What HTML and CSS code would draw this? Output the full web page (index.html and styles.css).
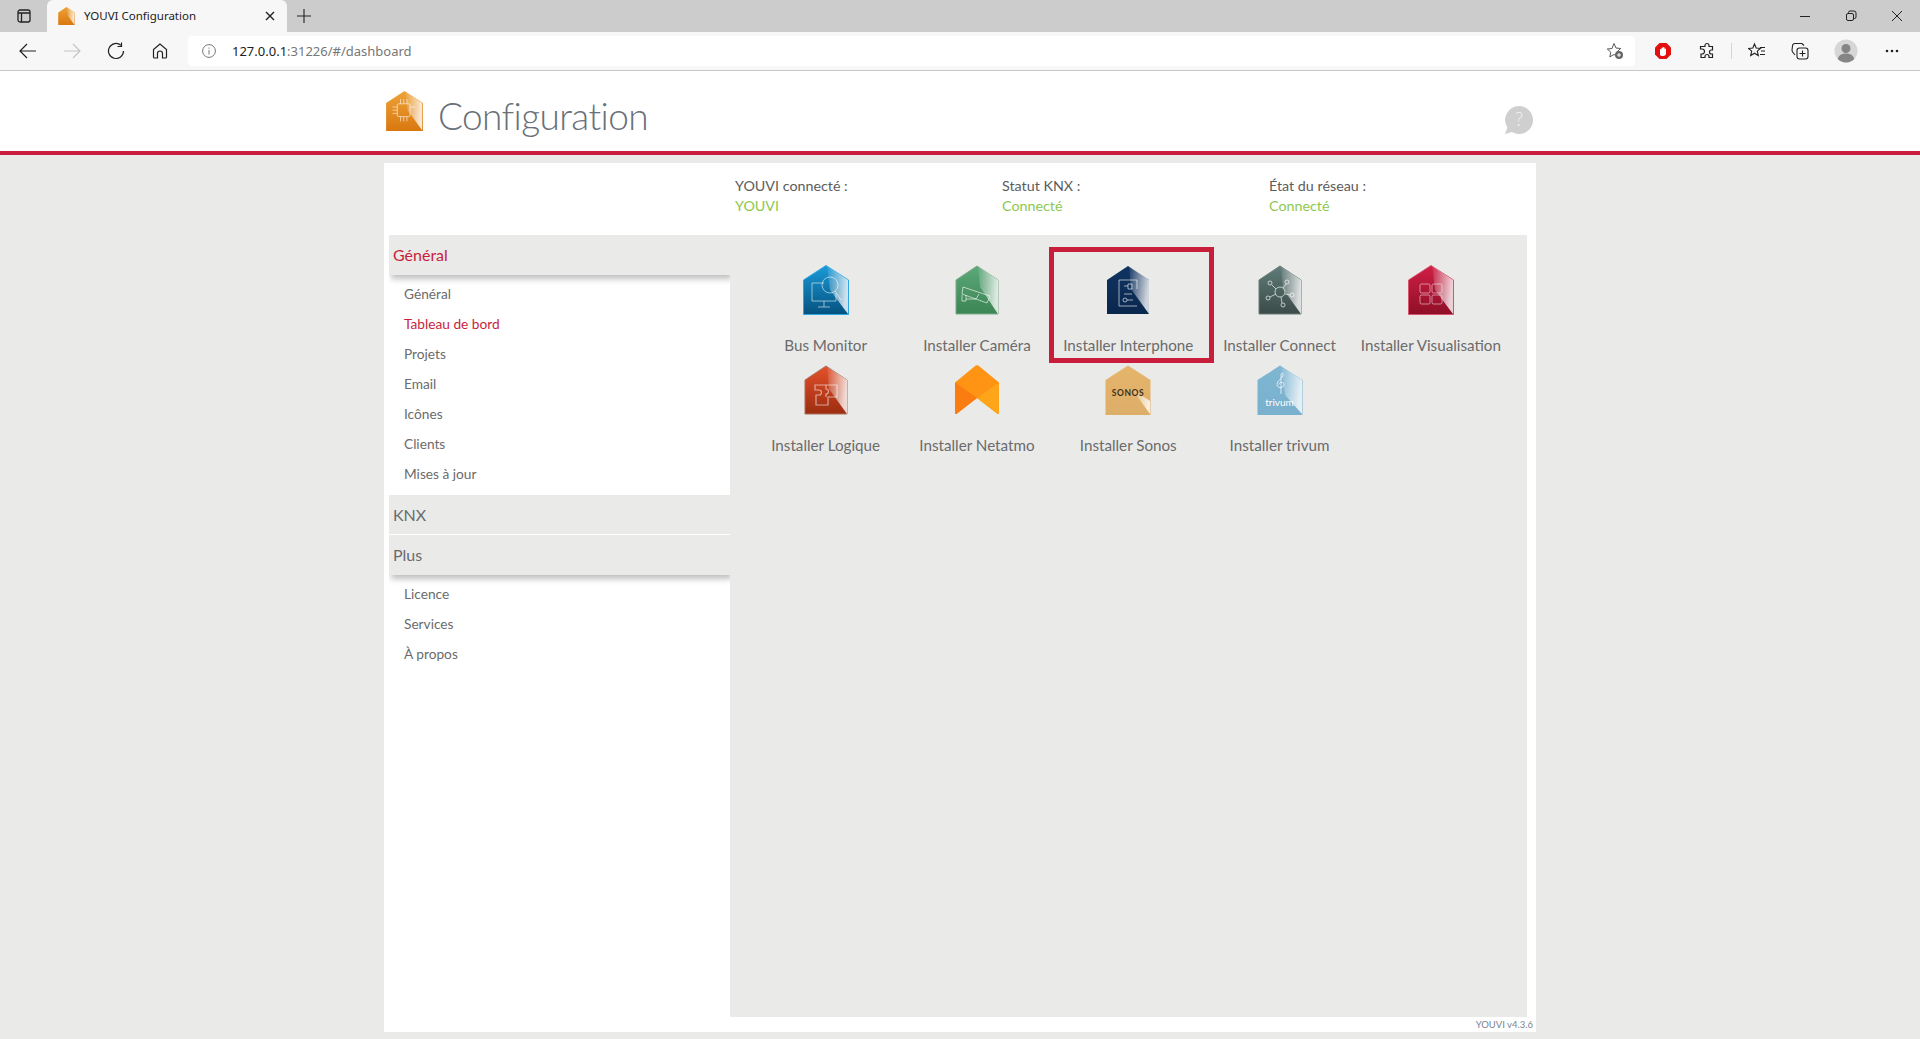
FILE: index.html
```html
<!DOCTYPE html>
<html lang="fr">

<head>
    <meta charset="UTF-8">
    <title>YOUVI Configuration</title>
    <link rel="stylesheet" href="styles.css">
</head>

<body>
    <svg class="svg-defs" aria-hidden="true">
        <defs>
            <linearGradient id="gloss" x1="0" y1="0" x2="1" y2="0.3">
                <stop offset="0" stop-color="#fff" stop-opacity="0.05" />
                <stop offset="1" stop-color="#fff" stop-opacity="0.8" />
            </linearGradient>
            <linearGradient id="g-orange" x1="0" y1="0" x2="0" y2="1">
                <stop offset="0" stop-color="#eda238" />
                <stop offset="1" stop-color="#d9780f" />
            </linearGradient>
            <linearGradient id="g-blue" x1="0" y1="0" x2="0" y2="1">
                <stop offset="0" stop-color="#1c9ad8" />
                <stop offset="1" stop-color="#04527f" />
            </linearGradient>
            <linearGradient id="g-green" x1="0" y1="0" x2="0" y2="1">
                <stop offset="0" stop-color="#5ca878" />
                <stop offset="1" stop-color="#3c8554" />
            </linearGradient>
            <linearGradient id="g-navy" x1="0" y1="0" x2="0" y2="1">
                <stop offset="0" stop-color="#0f3462" />
                <stop offset="1" stop-color="#0a274d" />
            </linearGradient>
            <linearGradient id="g-slate" x1="0" y1="0" x2="0" y2="1">
                <stop offset="0" stop-color="#5f7c78" />
                <stop offset="1" stop-color="#3b4b48" />
            </linearGradient>
            <linearGradient id="g-red" x1="0" y1="0" x2="0" y2="1">
                <stop offset="0" stop-color="#d01f44" />
                <stop offset="1" stop-color="#8f0f28" />
            </linearGradient>
            <linearGradient id="g-rust" x1="0" y1="0" x2="0" y2="1">
                <stop offset="0" stop-color="#e4502a" />
                <stop offset="1" stop-color="#9c2d10" />
            </linearGradient>
            <linearGradient id="g-sand" x1="0" y1="0" x2="0" y2="1">
                <stop offset="0" stop-color="#e6b56c" />
                <stop offset="1" stop-color="#ddae68" />
            </linearGradient>
            <linearGradient id="g-sky" x1="0" y1="0" x2="0" y2="1">
                <stop offset="0" stop-color="#7fb6d2" />
                <stop offset="1" stop-color="#79b0cd" />
            </linearGradient>
        </defs>
    </svg>

    <div class="tab-strip">
        <div class="tab-actions">
            <svg width="14" height="14" viewBox="0 0 14 14" fill="none" stroke="#222" stroke-width="1.3">
                <rect x="1" y="1" width="12" height="12" rx="2" />
                <path d="M1 4h12M4.500 4v9" />
            </svg>
        </div>
        <div class="tab">
            <svg width="17" height="18" viewBox="0 0 46 50">
                <polygon points="23,0 46,15 46,50 0,50 0,15" fill="url(#g-orange)" />
                <polygon points="24,1 45,15 45,49 27,25" fill="url(#gloss)" />
            </svg>
            <span class="tab-title">YOUVI Configuration</span>
            <svg class="tab-close" width="10" height="10" viewBox="0 0 10 10" stroke="#222" stroke-width="1.4">
                <path d="M1 1l8 8M9 1l-8 8" />
            </svg>
        </div>
        <div class="new-tab">
            <svg width="14" height="14" viewBox="0 0 14 14" stroke="#222" stroke-width="1.1">
                <path d="M7 0v14M0 7h14" />
            </svg>
        </div>
        <div class="window-controls">
            <svg width="46" height="32" viewBox="0 0 46 32" stroke="#222" fill="none">
                <path d="M18 16.500h10" />
            </svg>
            <svg width="46" height="32" viewBox="0 0 46 32" stroke="#222" fill="none">
                <rect x="18.500" y="13.500" width="7" height="7" rx="1.500" />
                <path d="M20.500 13.500v-1a1.500 1.500 0 0 1 1.500-1.500h4a2 2 0 0 1 2 2v4a1.500 1.500 0 0 1-1.500 1.500h-1" />
            </svg>
            <svg width="46" height="32" viewBox="0 0 46 32" stroke="#222" fill="none">
                <path d="M18 11l10 10M28 11l-10 10" />
            </svg>
        </div>
    </div>

    <div class="toolbar">
        <div class="tool-btn">
            <svg width="18" height="18" viewBox="0 0 18 18" fill="none" stroke="#222" stroke-width="1.2">
                <path d="M17 9H1M8 2L1 9l7 7" />
            </svg>
        </div>
        <div class="tool-btn">
            <svg width="18" height="18" viewBox="0 0 18 18" fill="none" stroke="#c4c4c4" stroke-width="1.2">
                <path d="M1 9h16M10 2l7 7-7 7" />
            </svg>
        </div>
        <div class="tool-btn">
            <svg width="18" height="18" viewBox="0 0 18 18" fill="none" stroke="#222" stroke-width="1.2">
                <path d="M14 3.400A7.500 7.500 0 1 0 16.500 9M14.500 0.500v4h-4" />
            </svg>
        </div>
        <div class="tool-btn">
            <svg width="18" height="18" viewBox="0 0 18 18" fill="none" stroke="#222" stroke-width="1.2">
                <path d="M9 2L2.500 7.500V15a1 1 0 0 0 1 1h3v-4.500a2.500 2.500 0 0 1 5 0V16h3a1 1 0 0 0 1-1V7.500z" />
            </svg>
        </div>
        <div class="address-bar">
            <svg class="info-icon" width="14" height="14" viewBox="0 0 14 14" fill="none" stroke="#777">
                <circle cx="7" cy="7" r="6.400" />
                <path d="M7 6v4.500M7 3.500v1.200" />
            </svg>
            <span class="url"><span class="url-host">127.0.0.1</span>:31226/#/dashboard</span>
            <svg class="star-add" width="18" height="18" viewBox="0 0 18 18" fill="none" stroke="#555">
                <path d="M8 1.500l2 4.500 4.700.5-3.500 3.200 1 4.700L8 12.500l-4.200 2.400 1-4.700-3.500-3.200 4.700-.5z" />
                <circle cx="13" cy="13" r="4" fill="#666" stroke="none" />
                <path d="M13 11v4M11 13h4" stroke="#fff" />
            </svg>
        </div>
        <div class="tool-btn">
            <svg width="18" height="18" viewBox="0 0 18 18">
                <path d="M5.500 1h7L17 5.500v7L12.500 17h-7L1 12.500v-7z" fill="#e2110f" />
                <path d="M6 13V7.500a.8.8 0 0 1 1.500 0V6a.8.8 0 0 1 1.500 0v-.5a.8.8 0 0 1 1.500 0V7a.8.8 0 0 1 1.500 0v4c0 2-1 3-3 3H8c-1 0-1.500-.5-2-1z" fill="#fff" />
            </svg>
        </div>
        <div class="tool-btn">
            <svg width="18" height="18" viewBox="0 0 18 18" fill="none" stroke="#222" stroke-width="1.2">
                <path d="M7 3.500a2 2 0 0 1 4 0V4.500h3.500v3.500h-1a2 2 0 0 0 0 4h1v3.500H11v-1a2 2 0 0 0-4 0v1H3V12h1a2.500 2.500 0 0 0 0-5H2.500V4.500H7z" />
            </svg>
        </div>
        <div class="tool-sep"></div>
        <div class="tool-btn narrow">
            <svg width="18" height="18" viewBox="0 0 18 18" fill="none" stroke="#222" stroke-width="1.1">
                <path d="M6.500 2l1.700 4 4.300.4-3.200 2.800 1 4.300-3.800-2.300-3.800 2.300 1-4.300L.5 6.400l4.300-.4z" />
                <path d="M12 5.500h5M13 9h4M12 12.500h5" />
            </svg>
        </div>
        <div class="tool-btn wide">
            <svg width="18" height="18" viewBox="0 0 18 18" fill="none" stroke="#222" stroke-width="1.1">
                <rect x="6" y="6" width="11" height="11" rx="2.500" />
                <path d="M11.500 8.500v6M8.500 11.500h6M13 3.500L11 1.500H4a2.500 2.500 0 0 0-2.500 2.500L1 8c0 1 .3 1.800 1 2.500L4 13" />
            </svg>
        </div>
        <div class="tool-btn wide">
            <svg width="24" height="24" viewBox="0 0 24 24">
                <circle cx="12" cy="12" r="11.500" fill="#d6d6d6" />
                <circle cx="12" cy="9.500" r="4.500" fill="#858585" />
                <path d="M3.800 20c1-4 4-5.500 8.200-5.500s7.200 1.500 8.200 5.500a11.500 11.500 0 0 1-16.400 0z" fill="#858585" />
            </svg>
        </div>
        <div class="tool-btn">
            <svg width="14" height="4" viewBox="0 0 14 4" fill="#222">
                <circle cx="2" cy="2" r="1.300" />
                <circle cx="7" cy="2" r="1.300" />
                <circle cx="12" cy="2" r="1.300" />
            </svg>
        </div>
    </div>

    <header class="app-header">
        <div class="header-inner">
            <svg class="logo" width="37" height="40" viewBox="0 0 46 50">
                <polygon points="23,0 46,15 46,50 0,50 0,15" fill="url(#g-orange)" />
                <polygon points="24,1 45,15 45,49 27,24" fill="url(#gloss)" />
                <g fill="none" stroke="#fff" stroke-opacity="0.6" stroke-width="1.200">
                    <rect x="14" y="16" width="16" height="16" rx="2" />
                    <path d="M8 20h6M8 24h6M8 28h6M18 10v6M22 10v6M26 10v6M18 32v6M22 32v6M26 32v6M30 20h6" />
                </g>
            </svg>
            <h1 class="page-title">Configuration</h1>
            <svg class="help-icon" width="30" height="30" viewBox="0 0 30 30">
                <path d="M15 1a14 14 0 1 1-7 26.100L1 29l2.400-6.500A14 14 0 0 1 15 1z" fill="#cfcfcf" />
                <text x="15" y="21" text-anchor="middle" class="help-mark">?</text>
            </svg>
        </div>
    </header>
    <div class="red-line"></div>

    <main class="card">
        <div class="status-row">
            <div class="status-item">
                <div>YOUVI connecté :</div>
                <div class="status-ok">YOUVI</div>
            </div>
            <div class="status-item">
                <div>Statut KNX :</div>
                <div class="status-ok">Connecté</div>
            </div>
            <div class="status-item">
                <div>État du réseau :</div>
                <div class="status-ok">Connecté</div>
            </div>
        </div>

        <div class="panel">
            <nav class="sidebar">
                <div class="side-head open active">Général</div>
                <ul class="side-list">
                    <li>Général</li>
                    <li class="active">Tableau de bord</li>
                    <li>Projets</li>
                    <li>Email</li>
                    <li>Icônes</li>
                    <li>Clients</li>
                    <li>Mises à jour</li>
                </ul>
                <div class="side-head knx">KNX</div>
                <div class="side-head open">Plus</div>
                <ul class="side-list">
                    <li>Licence</li>
                    <li>Services</li>
                    <li>À propos</li>
                </ul>
            </nav>

            <section class="apps">
                <div class="app">
                    <svg class="app-icon" viewBox="0 0 46 50">
                        <polygon points="23,0.500 45.500,15 45.500,49.500 0.500,49.500 0.500,15" fill="url(#g-blue)" stroke="#2ea7e0" />
                        <polygon points="24,1 45,15 45,49 27,25" fill="url(#gloss)" />
                        <g fill="none" stroke="#fff" stroke-opacity="0.55">
                            <path d="M21 18H9v18h24v-8M21 36v6M15 42h12" />
                            <circle cx="27" cy="20" r="8" />
                            <path d="M32 26l6 9" />
                        </g>
                    </svg>
                    <div class="app-name">Bus Monitor</div>
                </div>
                <div class="app">
                    <svg class="app-icon" viewBox="0 0 46 50">
                        <polygon points="23,1 44,15 44,49 2,49 2,15" fill="url(#g-green)" stroke="#7da88a" />
                        <polygon points="24,1.500 44,15 44,49 26,22" fill="url(#gloss)" />
                        <g fill="none" stroke="#fff" stroke-opacity="0.6">
                            <path d="M9 22l27 9-3 7-25-9zM12 30v6H8v-6M12 34h10l3-5" />
                        </g>
                    </svg>
                    <div class="app-name">Installer Caméra</div>
                </div>
                <div class="app selected">
                    <svg class="app-icon" viewBox="0 0 46 50">
                        <polygon points="23,1 44,15 44,49 2,49 2,15" fill="url(#g-navy)" />
                        <polygon points="24,1.500 44,15 44,49 26,24" fill="url(#gloss)" />
                        <g fill="none" stroke="#fff" stroke-opacity="0.6">
                            <path d="M32 24V15H14v26h18M23 19h4v5h-4zM23 21l-4 0M19 29h8" />
                            <circle cx="20" cy="35" r="2" />
                            <path d="M22 35h6" />
                        </g>
                    </svg>
                    <div class="app-name">Installer Interphone</div>
                </div>
                <div class="app">
                    <svg class="app-icon" viewBox="0 0 46 50">
                        <polygon points="23,1 44,15 44,49 2,49 2,15" fill="url(#g-slate)" stroke="#6b7b78" />
                        <polygon points="24,1.500 44,15 44,49 26,24" fill="url(#gloss)" />
                        <g fill="none" stroke="#fff" stroke-opacity="0.65">
                            <circle cx="23" cy="27" r="5" />
                            <circle cx="13" cy="18" r="2" />
                            <circle cx="30" cy="17" r="2" />
                            <circle cx="35" cy="30" r="2" />
                            <circle cx="26" cy="40" r="2" />
                            <circle cx="11" cy="33" r="2" />
                            <path d="M15 20l4 4M29 19l-3 4M33 30l-5-1M25 38l-1-6M13 32l6-3" />
                        </g>
                    </svg>
                    <div class="app-name">Installer Connect</div>
                </div>
                <div class="app">
                    <svg class="app-icon" viewBox="0 0 46 50">
                        <polygon points="23,0.500 45.500,15 45.500,49.500 0.500,49.500 0.500,15" fill="url(#g-red)" stroke="#d8546c" />
                        <polygon points="24,1 45,15 45,49 27,25" fill="url(#gloss)" />
                        <g fill="none" stroke="#fff" stroke-opacity="0.5">
                            <rect x="12" y="19" width="10" height="9" rx="1.500" />
                            <rect x="24" y="19" width="10" height="9" rx="1.500" />
                            <rect x="12" y="30" width="10" height="9" rx="1.500" />
                            <rect x="24" y="30" width="10" height="9" rx="1.500" />
                        </g>
                    </svg>
                    <div class="app-name">Installer Visualisation</div>
                </div>
                <div class="app">
                    <svg class="app-icon" viewBox="0 0 46 50">
                        <polygon points="23,1 44,15 44,49 2,49 2,15" fill="url(#g-rust)" stroke="#a8705f" />
                        <polygon points="24,1.500 44,15 44,49 26,24" fill="url(#gloss)" />
                        <g fill="none" stroke="#fff" stroke-opacity="0.55" stroke-width="1.200">
                            <path d="M12 20h22v12h-9v8H13V30h3a2.500 2.500 0 0 0 0-5h-4zM23 20v4a2.500 2.500 0 0 1 0 5v3" />
                        </g>
                    </svg>
                    <div class="app-name">Installer Logique</div>
                </div>
                <div class="app">
                    <svg class="app-icon" viewBox="0 0 46 50">
                        <path d="M20.500 1.500a3.500 3.500 0 0 1 5 0L45 17.500V48a1 1 0 0 1-1.700.7L23 33 2.700 48.700A1 1 0 0 1 1 48V17.500z" fill="#ff9314" />
                        <path d="M1 17.500L23 33 2.700 48.700A1 1 0 0 1 1 48z" fill="#fb7c10" />
                        <path d="M45 17.500L23 33l20.300 15.700A1 1 0 0 0 45 48z" fill="#ffa51a" />
                    </svg>
                    <div class="app-name">Installer Netatmo</div>
                </div>
                <div class="app">
                    <svg class="app-icon" viewBox="0 0 46 50">
                        <polygon points="23,0.500 45.500,15 45.500,50 0.500,50 0.500,15" fill="url(#g-sand)" />
                        <polygon points="27,24 45,36 45,49" fill="url(#gloss)" />
                        <text x="23" y="31" text-anchor="middle" class="sonos-mark">SONOS</text>
                    </svg>
                    <div class="app-name">Installer Sonos</div>
                </div>
                <div class="app">
                    <svg class="app-icon" viewBox="0 0 46 50">
                        <polygon points="23,0.500 45.500,15 45.500,50 0.500,50 0.500,15" fill="url(#g-sky)" />
                        <polygon points="24,1 45,15 45,49 28,30" fill="url(#gloss)" />
                        <g fill="none" stroke="#fff" stroke-opacity="0.75">
                            <path d="M24 29V10c0-2 2-3 2-.500 0 4-6 6-6 10 0 4 7 4 7 0 0-3-5-3-5 0" />
                        </g>
                        <text x="22.500" y="41" text-anchor="middle" class="trivum-mark">trivum</text>
                    </svg>
                    <div class="app-name">Installer trivum</div>
                </div>
            </section>
        </div>

        <div class="version">YOUVI v4.3.6</div>
    </main>
</body>

</html>
```

FILE: styles.css
```css
*,
*::after {
    box-sizing: border-box;
}

html,
body {
    height: 100%;
}

body {
    margin: 0;
    display: flex;
    flex-direction: column;
    overflow: hidden;
    background-color: #eaeae9;
    font-family: Lato, "Noto Sans", sans-serif;
    color: #6b6b6b;
}

.svg-defs {
    position: absolute;
    width: 0;
    height: 0;
}

/* browser chrome */
.tab-strip {
    display: flex;
    flex: none;
    height: 32px;
    background-color: #ccc;
}

.tab-actions {
    display: flex;
    align-items: center;
    justify-content: center;
    width: 47px;
}

.tab {
    display: flex;
    align-items: center;
    width: 240px;
    padding: 0 10px 0 11px;
    gap: 9px;
    background-color: #f7f7f7;
    border-radius: 6px 6px 0 0;
}

.tab-title {
    flex: 1;
    margin-top: -1px;
    font-family: "Noto Sans", sans-serif;
    font-size: 11.500px;
    color: #222;
}

.tab-close {
    margin-right: 2px;
}

.new-tab {
    display: flex;
    align-items: center;
    justify-content: center;
    width: 34px;
}

.window-controls {
    display: flex;
    margin-left: auto;
}

.toolbar {
    display: flex;
    flex: none;
    align-items: center;
    height: 39px;
    padding: 0 6px;
    background-color: #f7f7f7;
    border-bottom: 1px solid #c8c8c8;
}

.tool-btn {
    display: flex;
    flex: none;
    align-items: center;
    justify-content: center;
    width: 44px;
    height: 32px;
}

.tool-btn.wide {
    margin-right: 2px;
}

.tool-btn.narrow {
    margin-right: -1px;
}

.tool-sep {
    width: 1px;
    height: 16px;
    margin: 0 3px 0 2px;
    background-color: #d4d4d4;
}

.address-bar {
    display: flex;
    flex: 1;
    align-items: center;
    height: 30px;
    margin: 0 6px;
    padding: 0 11px 0 14px;
    background-color: #fff;
    border-radius: 4px;
}

.url {
    flex: 1;
    margin-left: 16px;
    font-family: "Noto Sans", sans-serif;
    font-size: 13px;
    color: #777;
}

.url-host {
    color: #222;
}

/* app header */
.app-header {
    flex: none;
    height: 80px;
    background-color: #fff;
}

.header-inner {
    display: flex;
    align-items: center;
    width: 1152px;
    height: 100%;
    margin: 0 auto;
    padding: 0 0 0 2px;
}

.page-title {
    flex: 1;
    margin: 9px 0 0 15px;
    font-size: 37px;
    font-weight: 300;
    letter-spacing: -0.6px;
    color: #6a7078;
}

.help-icon {
    margin: 18px 2px 0 0;
}

.help-mark {
    font-size: 19px;
    font-weight: 300;
    fill: #f2f2f2;
}

.red-line {
    flex: none;
    height: 4px;
    background-color: #c81e3c;
}

/* main card */
.card {
    display: flex;
    flex: 1;
    flex-direction: column;
    width: 1152px;
    margin: 8px auto 7px;
    padding: 0 9px 0 5px;
    background-color: #fff;
}

.status-row {
    display: flex;
    flex: none;
    height: 72px;
    padding: 13px 0 0 346px;
    font-size: 14.300px;
    line-height: 20px;
    color: #5c5c5c;
}

.status-item {
    flex: none;
    width: 267px;
}

.status-ok {
    color: #8cc850;
}

.panel {
    display: flex;
    flex: 1;
    background-color: #eaeae9;
}

.sidebar {
    flex: none;
    width: 341px;
    background-color: #fff;
}

.side-head {
    position: relative;
    height: 40px;
    padding-left: 4px;
    font-size: 16px;
    line-height: 39px;
    background-color: #eaeae9;
}

.side-head.active {
    color: #c81e3c;
}

.side-head.open {
    box-shadow: 2px 4px 6px rgba(0, 0, 0, 0.25);
    clip-path: inset(0 0 -12px 0);
}

.side-head.knx {
    border-bottom: 1px solid #fff;
}

.side-list {
    margin: 0;
    padding: 4px 0 6px 15px;
    list-style: none;
    font-size: 13.700px;
    line-height: 30px;
}

.side-list .active {
    color: #c81e3c;
}

.apps {
    display: grid;
    flex: 1;
    grid-template-columns: repeat(5, 151.300px);
    grid-auto-rows: 100px;
    align-content: start;
    padding: 25px 0 0 20px;
}

.app {
    position: relative;
    display: flex;
    flex-direction: column;
    align-items: center;
    padding-top: 5px;
}

.app-icon {
    display: block;
    width: 46px;
    height: 50px;
    margin-bottom: 20px;
}

.app-name {
    font-size: 15.200px;
    line-height: 20px;
    white-space: nowrap;
}

.app.selected::after {
    content: "";
    position: absolute;
    top: -13px;
    left: -4px;
    width: 165px;
    height: 116px;
    border: 5px solid #c81e3c;
}

.sonos-mark {
    font-family: Lato, sans-serif;
    font-size: 8.500px;
    font-weight: 700;
    letter-spacing: 0.6px;
    fill: #3d3020;
}

.trivum-mark {
    font-family: Lato, sans-serif;
    font-size: 10px;
    fill: #fff;
}

.version {
    flex: none;
    height: 15px;
    margin-right: -6px;
    font-size: 9.500px;
    line-height: 16px;
    text-align: right;
    color: #7a8490;
}
```
